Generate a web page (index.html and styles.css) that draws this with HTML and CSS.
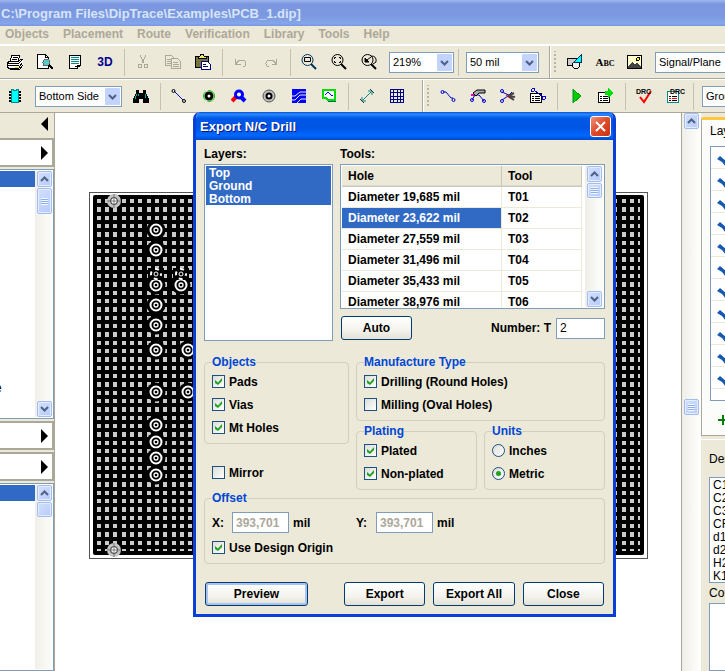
FILE: index.html
```html
<!DOCTYPE html>
<html lang="en">
<head>
    <meta charset="UTF-8">
    <meta name="viewport" content="width=device-width, initial-scale=1.0">
    <title>PCB_1.dip - Export N/C Drill</title>
    <link rel="stylesheet" href="styles.css">
</head>
<body>

<svg class="defs" width="0" height="0" aria-hidden="true">
    <symbol id="up" viewBox="0 0 9 6"><path d="M1 5 4.500 1.500 8 5" fill="none" stroke="#4d6185" stroke-width="2"/></symbol>
    <symbol id="down" viewBox="0 0 9 6"><path d="M1 1 4.500 4.500 8 1" fill="none" stroke="#4d6185" stroke-width="2"/></symbol>
    <symbol id="tri-right" viewBox="0 0 7 14"><path d="M0 0 7 7 0 14z"/></symbol>
    <symbol id="tri-left" viewBox="0 0 7 14"><path d="M7 0 0 7 7 14z"/></symbol>
    <symbol id="layer-check" viewBox="0 0 16 12"><path d="M0 3 3 0 9 5 16 0V6L9 11 5 6z" fill="#1459b3"/></symbol>
    <symbol id="via" viewBox="-11 -11 22 22">
        <circle r="9.500" fill="#000"/>
        <circle r="5.500" fill="none" stroke="#fff" stroke-width="2"/>
        <circle r="2" fill="#000" stroke="#fff" stroke-width="1.300"/>
    </symbol>
    <symbol id="via-small" viewBox="-8 -6 16 12">
        <rect x="-8" y="-6" width="16" height="12"/>
        <circle r="5" fill="none" stroke="#fff" stroke-width="2" stroke-dasharray="4 4" stroke-dashoffset="2"/>
        <circle r="2" fill="none" stroke="#fff"/>
    </symbol>
    <symbol id="mount" viewBox="-8 -8 16 16">
        <circle r="7" fill="#c4c4c4"/>
        <circle r="3.500" fill="#fff" stroke="#222"/>
        <path d="M-7 0H7M0-7V7" stroke="#777"/>
    </symbol>
</svg>

<div class="app">
    <header class="titlebar">C:\Program Files\DipTrace\Examples\PCB_1.dip]</header>

    <nav class="menu">
        <a href="#">Objects</a>
        <a href="#">Placement</a>
        <a href="#">Route</a>
        <a href="#">Verification</a>
        <a href="#">Library</a>
        <a href="#">Tools</a>
        <a href="#">Help</a>
    </nav>

    <div class="toolbar">
        <button class="tool" aria-label="Print"><svg viewBox="0 0 16 16"><path d="M5 1h8l-2 6H3z" fill="#fff" stroke="#000"/><path d="M6 3h5M5 5h5" stroke="#000"/><path d="M3 7h9l2-2 2 1v5l-3 4H3l-3-2V9z" fill="#fff" stroke="#000"/><path d="M0 9h12l3-3M1 11h11M3 14h9l3-5" stroke="#000" fill="none"/><path d="M8 13h3" stroke="#dd0" stroke-width="1"/></svg></button>
        <button class="tool" aria-label="Preview"><svg viewBox="0 0 16 16"><path d="M.5.500h8l3 3v11H.5z" fill="#fff" stroke="#000"/><path d="M8.500.500v3h3" fill="none" stroke="#000"/><circle cx="9.500" cy="8.500" r="3.500" fill="#5cc" stroke="#666"/><path d="m12 11 4 4" stroke="#000" stroke-width="2"/></svg></button>
        <button class="tool" aria-label="Titles"><svg viewBox="0 0 16 16"><path d="M2.500 1.500h11v10h-3v3h-8z" fill="#fff" stroke="#000"/><path d="M4 3.500h8M4 5.500h8M4 7.500h8M4 9.500h8" stroke="#088"/><path d="M8 12.500h5" stroke="#000"/></svg></button>
        <button class="tool text3d">3D</button>
        <span class="sep"></span>
        <button class="tool" aria-label="Cut"><svg viewBox="0 0 16 16" fill="none" stroke="#aca899"><path d="m5 1 4 8M11 1 7 9"/><circle cx="5" cy="12" r="2"/><circle cx="11" cy="12" r="2"/></svg></button>
        <button class="tool" aria-label="Copy"><svg viewBox="0 0 16 16" fill="#ece9d8" stroke="#aca899"><path d="M.5 1.500h6l3 3v7h-9zM2 5.500h5M2 7.500h5M2 9.500h5"/><path d="M6.500 4.500h6l3 3v7h-9zM8 8.500h5M8 10.500h6M8 12.500h6"/></svg></button>
        <button class="tool" aria-label="Paste"><svg viewBox="0 0 16 16"><path d="M.5 2.500h13v11H.5z" fill="#77743c" stroke="#000"/><path d="M3 4h8V2H9L8 .5H6L5 2H3z" fill="#ee6" stroke="#000"/><path d="M6.500 7.500h6l3 3v5h-9z" fill="#fff" stroke="#008"/><path d="M8 10.500h3M8 12.500h5" stroke="#008"/></svg></button>
        <span class="sep"></span>
        <button class="tool" aria-label="Undo"><svg viewBox="0 0 16 16" fill="none" stroke="#aca899"><path d="M2.500 5v5h5M3 9.500l3-3h4q3 0 3 3t-3 3"/></svg></button>
        <button class="tool" aria-label="Redo"><svg viewBox="0 0 16 16" fill="none" stroke="#aca899"><path d="M13.500 5v5h-5M13 9.500l-3-3H6q-3 0-3 3t3 3"/></svg></button>
        <span class="sep"></span>
        <button class="tool" aria-label="Zoom window"><svg class="smooth" viewBox="0 0 16 16" fill="none"><circle cx="6.500" cy="6" r="5.500" stroke="#036"/><path d="M3.500 3.500h6v4h-6z" stroke="#000"/><path d="m10 10 5 5" stroke="#035" stroke-width="2"/></svg></button>
        <button class="tool" aria-label="Zoom all"><svg class="smooth" viewBox="0 0 16 16" fill="none"><circle cx="6.500" cy="6" r="5.500" stroke="#000"/><path d="M3.500 5V3.500H5M8 3.500h1.500V5M3.500 7v1.500H5M8 8.500h1.500V7" stroke="#000"/><path d="m10 10 5 5" stroke="#000" stroke-width="2"/></svg></button>
        <button class="tool" aria-label="Zoom previous"><svg class="smooth" viewBox="0 0 16 16" fill="none"><circle cx="6.500" cy="6" r="5.500" stroke="#000"/><path d="M4 4v4h4zM6 6l4-3" stroke="#000" fill="#000"/><path d="M10 2q6 0 5 6l-3 2" stroke="#000"/><path d="m10 10 5 5" stroke="#000" stroke-width="2"/></svg></button>
        <select class="combo zoom" aria-label="Zoom"><option>219%</option></select>
        <span class="sep"></span>
        <select class="combo grid-size" aria-label="Grid"><option>50 mil</option></select>
        <span class="band"></span>
        <button class="tool" aria-label="Shape"><svg viewBox="0 0 16 16"><path d="M.5 4.500h9v7h-9z" fill="#ccc" stroke="#000" stroke-width="1"/><circle cx="9" cy="11" r="3.500" fill="#eee" stroke="#000"/><path d="M14.500.500v8h-8z" fill="#0ff" stroke="#035"/></svg></button>
        <button class="tool abc">A<small>BC</small></button>
        <button class="tool" aria-label="Picture"><svg viewBox="0 0 16 16"><path d="M.500 1.500h14v13H.5z" fill="#ffc" stroke="#000"/><path d="m1 13 4-5 3 2 2-1 4 4v1H1z" fill="#444"/><circle cx="11" cy="5" r="1.500" fill="#ff0" stroke="#000"/></svg></button>
        <select class="combo layer-type" aria-label="Layer type"><option>Signal/Plane</option></select>
    </div>

    <div class="toolbar">
        <button class="tool" aria-label="Component"><svg viewBox="0 0 16 16"><path d="M2 3.500h12M2 6.500h12M2 9.500h12M2 12.500h12" stroke="#000" stroke-width="2"/><path d="M4.500 1.500h2v1h3v-1h2v13h-7z" fill="#0ff" stroke="#088"/></svg></button>
        <select class="combo side" aria-label="Side"><option>Bottom Side</option></select>
        <button class="tool" aria-label="Find"><svg viewBox="0 0 16 16"><path d="M3 2h3v3h4V2h3v3l3 6v4h-6v-4H6v4H0v-4l3-6z"/><path d="M3.500 6 2 11M5 6v2M12 6l1 4" stroke="#0aa"/></svg></button>
        <span class="sep"></span>
        <button class="tool" aria-label="Route"><svg class="smooth" viewBox="0 0 16 16" fill="none"><path d="m3 3 9 9" stroke="#00c"/><circle cx="2.500" cy="3" r="1.500" stroke="#000"/><circle cx="13" cy="13" r="1.500" stroke="#000"/></svg></button>
        <button class="tool" aria-label="Via"><svg class="smooth" viewBox="0 0 16 16" fill="none"><circle cx="8" cy="8" r="5.500" stroke="#0c0" stroke-dasharray="10 2"/><circle cx="8" cy="8" r="3" fill="#fff" stroke="#000" stroke-width="3"/></svg></button>
        <button class="tool" aria-label="Arc route"><svg class="smooth" viewBox="0 0 16 16" fill="none"><path d="m1 13 4-4" stroke="#f00" stroke-width="4"/><path d="m10 9 4 4" stroke="#00f" stroke-width="4"/><circle cx="8" cy="6.500" r="3.500" stroke="#00f" stroke-width="3" fill="#fff"/></svg></button>
        <button class="tool" aria-label="Pad"><svg class="smooth" viewBox="0 0 16 16"><circle cx="8" cy="8" r="6" fill="#c0c0c0" stroke="#555"/><circle cx="8" cy="8" r="2.500" fill="#fff" stroke="#000" stroke-width="2"/></svg></button>
        <button class="tool" aria-label="Copper pour"><svg class="smooth" viewBox="0 0 16 16"><path d="M1 1h14v14H1z" fill="#00f"/><path d="M1 8h3l5-4h6M1 12h3l5-5h6M6 15l4-4h5" stroke="#ece9d8" fill="none"/></svg></button>
        <button class="tool" aria-label="Board"><svg viewBox="0 0 16 16"><path d="M2 3h13v11H7l-2-3H2z" fill="#066"/><path d="M1.500 1.500h12v10h-7l-2-2h-3z" fill="#fff" stroke="#0d0" stroke-width="2"/><path d="m4 7 3-3 3 3h2" stroke="#00f" fill="none"/></svg></button>
        <span class="sep"></span>
        <button class="tool" aria-label="Dimension"><svg class="smooth" viewBox="0 0 16 16" fill="none" stroke="#088"><path d="M4 12 12 4M3 9v4h4M9 3h4v4"/><path d="m1 11 4 4M11 1l4 4" stroke="#333"/></svg></button>
        <button class="tool" aria-label="Table"><svg viewBox="0 0 16 16" fill="none" stroke="#008"><path d="M1.500 1.500h13v13h-13zM4.500 2v12M8.500 2v12M11.500 2v12M2 4.500h12M2 8.500h12M2 11.500h12"/></svg></button>
        <span class="band"></span>
        <button class="tool" aria-label="Net"><svg class="smooth" viewBox="0 0 16 16" fill="none" stroke="#00c"><path d="M3 4h3l5 6h2"/><circle cx="2.500" cy="4" r="1.500"/><circle cx="13.500" cy="12" r="1.500"/></svg></button>
        <button class="tool" aria-label="Edit net"><svg class="smooth" viewBox="0 0 16 16" fill="none"><path d="m2 12 3-5h4l5 6" stroke="#00c"/><path d="m3 5 4-3h8v3H9l-3 3z" fill="#aaa" stroke="#000"/><circle cx="2" cy="12" r="1.500" stroke="#00c"/><circle cx="14" cy="13" r="1.500" stroke="#00c"/><path d="M1 7h3" stroke="#e0a" stroke-width="2"/></svg></button>
        <button class="tool" aria-label="Delete net"><svg class="smooth" viewBox="0 0 16 16" fill="none"><path d="m2 4 9 4M2 12l6-4 4-4" stroke="#00c"/><circle cx="2" cy="3" r="1.500" stroke="#00c"/><circle cx="2" cy="13" r="1.500" stroke="#00c"/><path d="m8 8 6-3M8 8l7 1M8 8l6 4" stroke="#444" stroke-width="2"/><path d="m6 7 4 3" stroke="#d00"/></svg></button>
        <button class="tool" aria-label="Net list"><svg viewBox="0 0 16 16"><path d="M.5 5.500h11v9H.5z" fill="#fff" stroke="#000"/><path d="M2 8.500h2M5 8.500h5M2 10.500h2M5 10.500h5M2 12.500h2M5 12.500h5" stroke="#000"/><path d="m4 2 9 7" stroke="#00c"/><circle cx="3" cy="2" r="1.500" fill="none" stroke="#00c"/><circle cx="14" cy="10" r="1.500" fill="none" stroke="#00c"/></svg></button>
        <span class="sep"></span>
        <button class="tool" aria-label="Run autorouter"><svg viewBox="0 0 16 16"><path d="M5 1.500 13 8l-8 7z" fill="#0c0" stroke="#0a0"/><path d="M4.500 1v14" stroke="#7b9"/></svg></button>
        <button class="tool" aria-label="Autorouter setup"><svg viewBox="0 0 16 16"><path d="M.5 4.500h11v10H.5z" fill="#fff" stroke="#000"/><path d="M2 8.500h2M5 8.500h5M2 10.500h2M5 10.500h5M2 12.500h2M5 12.500h5" stroke="#000"/><path d="M7 3h3V0l6 5-6 5V7H7z" fill="#0d0"/></svg></button>
        <span class="sep"></span>
        <button class="tool drc" aria-label="Check design rules"><svg class="smooth" viewBox="0 0 16 16"><path d="m4 9 4 5 7-11" fill="none" stroke="#f00" stroke-width="2"/></svg><i>DRC</i></button>
        <button class="tool drc" aria-label="Design rules"><svg viewBox="0 0 16 16"><path d="M1.500 3.500h11v11h-11z" fill="#fff" stroke="#088"/><path d="M3 8.500h2M6 8.500h5M3 12.500h2M6 12.500h5" stroke="#000"/><path d="M3 10.500h2M6 10.500h5" stroke="#f00"/></svg><i>DRC</i></button>
        <span class="sep"></span>
        <select class="combo layer-type" aria-label="Layer"><option>Ground</option></select>
    </div>

    <main class="workspace">
        <aside class="left-panel">
            <div class="panel-head"><svg class="tri"><use href="#tri-left"/></svg></div>
            <button class="expander" aria-label="Expand libraries"><svg class="tri"><use href="#tri-right"/></svg></button>
            <div class="tree components">
                <div class="tree-items"><div class="picked"></div><span class="clipped">e</span></div>
                <div class="scroll">
                    <button aria-label="Up"><svg><use href="#up"/></svg></button>
                    <div class="thumb"></div>
                    <button class="to-end" aria-label="Down"><svg><use href="#down"/></svg></button>
                </div>
            </div>
            <button class="expander" aria-label="Expand patterns"><svg class="tri"><use href="#tri-right"/></svg></button>
            <button class="expander" aria-label="Expand vias"><svg class="tri"><use href="#tri-right"/></svg></button>
            <div class="tree rest">
                <div class="tree-items"><div class="picked"></div></div>
                <div class="scroll">
                    <button aria-label="Up"><svg><use href="#up"/></svg></button>
                    <div class="thumb short"></div>
                </div>
            </div>
        </aside>

        <section class="canvas">
            <svg class="board" viewBox="0 0 559 367">
                <defs>
                    <pattern id="mesh" patternUnits="userSpaceOnUse" x="8" y="7" width="25" height="25">
                        <path d="M0 0h4v4H0zM8 0h4v4H8zM16 0h4v4h-4zM0 8h4v5H0zM8 8h4v5H8zM16 8h4v5h-4zM0 17h4v4H0zM8 17h4v4H8zM16 17h4v4h-4z" fill="#cbcbcb" shape-rendering="crispEdges"/>
                    </pattern>
                </defs>
                <rect x=".5" y=".5" width="558" height="366" fill="#fff" stroke="#555"/>
                <rect x="4" y="3" width="551" height="360" rx="2"/>
                <rect x="8" y="7" width="543" height="352" fill="url(#mesh)"/>
                <use href="#mount" x="17" y="1" width="16" height="16"/>
                <use href="#mount" x="17" y="350" width="16" height="16"/>
                <g>
                    <use href="#via" x="56" y="27" width="22" height="22"/>
                    <use href="#via" x="56" y="47" width="22" height="22"/>
                    <use href="#via" x="56" y="82" width="22" height="22"/>
                    <use href="#via-small" x="59" y="76" width="16" height="12"/>
                    <use href="#via" x="81" y="82" width="22" height="22"/>
                    <use href="#via-small" x="84" y="76" width="16" height="12"/>
                    <use href="#via" x="56" y="102" width="22" height="22"/>
                    <use href="#via" x="56" y="122" width="22" height="22"/>
                    <use href="#via" x="56" y="147" width="22" height="22"/>
                    <use href="#via" x="88" y="147" width="22" height="22"/>
                    <use href="#via" x="56" y="189" width="22" height="22"/>
                    <use href="#via" x="88" y="189" width="22" height="22"/>
                    <use href="#via" x="56" y="222" width="22" height="22"/>
                    <use href="#via" x="56" y="239" width="22" height="22"/>
                    <use href="#via" x="56" y="255" width="22" height="22"/>
                    <use href="#via" x="56" y="272" width="22" height="22"/>
                </g>
            </svg>
        </section>

        <div class="scroll canvas-scroll">
            <button aria-label="Up"><svg><use href="#up"/></svg></button>
            <div class="thumb"></div>
        </div>

        <aside class="right-panel">
            <div class="tab-page">
                <span>Layers</span>
                <ul class="layer-list">
                    <li><svg><use href="#layer-check"/></svg></li>
                    <li><svg><use href="#layer-check"/></svg></li>
                    <li><svg><use href="#layer-check"/></svg></li>
                    <li><svg><use href="#layer-check"/></svg></li>
                    <li><svg><use href="#layer-check"/></svg></li>
                    <li><svg><use href="#layer-check"/></svg></li>
                    <li><svg><use href="#layer-check"/></svg></li>
                    <li><svg><use href="#layer-check"/></svg></li>
                    <li><svg><use href="#layer-check"/></svg></li>
                    <li><svg><use href="#layer-check"/></svg></li>
                    <li><svg><use href="#layer-check"/></svg></li>
                </ul>
                <button class="add" aria-label="Add layer"><svg viewBox="0 0 12 12"><path d="M6 1v10M1 6h10" stroke="#008000" stroke-width="2"/></svg></button>
            </div>
            <div class="design">
                <span>Design</span>
                <ul class="parts">
                    <li>C1</li>
                    <li>C2</li>
                    <li>C3</li>
                    <li>CF</li>
                    <li>d1</li>
                    <li>d2</li>
                    <li>H2</li>
                    <li>K1</li>
                </ul>
                <span class="comp">Component</span>
                <div class="comp-list"></div>
            </div>
        </aside>
    </main>
</div>

<form class="dialog" role="dialog" aria-labelledby="dialogTitle">
    <div class="dialog-title">
        <h1 id="dialogTitle">Export N/C Drill</h1>
        <button type="button" class="close" aria-label="Close window"><svg viewBox="0 0 11 11"><path d="m1 1 9 9M10 1l-9 9" stroke="#fff" stroke-width="2"/></svg></button>
    </div>

    <div class="dialog-body">
        <div class="lists">
            <div class="layers">
                <label for="layers">Layers:</label>
                <select id="layers" multiple>
                    <option selected>Top</option>
                    <option selected>Ground</option>
                    <option selected>Bottom</option>
                </select>
            </div>
            <div class="tools">
                <span class="caption" id="toolsCaption">Tools:</span>
                <div class="tools-box">
                    <table aria-labelledby="toolsCaption">
                        <thead>
                            <tr><th>Hole</th><th>Tool</th></tr>
                        </thead>
                        <tbody>
                            <tr><td>Diameter 19,685 mil</td><td>T01</td></tr>
                            <tr class="current"><td>Diameter 23,622 mil</td><td>T02</td></tr>
                            <tr><td>Diameter 27,559 mil</td><td>T03</td></tr>
                            <tr><td>Diameter 31,496 mil</td><td>T04</td></tr>
                            <tr><td>Diameter 35,433 mil</td><td>T05</td></tr>
                            <tr><td>Diameter 38,976 mil</td><td>T06</td></tr>
                        </tbody>
                    </table>
                    <div class="scroll">
                        <button type="button" aria-label="Up"><svg><use href="#up"/></svg></button>
                        <div class="thumb short"></div>
                        <button type="button" class="to-end" aria-label="Down"><svg><use href="#down"/></svg></button>
                    </div>
                </div>
                <div class="tool-edit">
                    <button type="button" class="btn auto">Auto</button>
                    <label for="number">Number: T</label>
                    <input type="text" id="number" value="2">
                </div>
            </div>
        </div>

        <div class="options">
            <div class="col-left">
                <fieldset>
                    <legend>Objects</legend>
                    <label class="check"><input type="checkbox" checked>Pads</label>
                    <label class="check"><input type="checkbox" checked>Vias</label>
                    <label class="check"><input type="checkbox" checked>Mt Holes</label>
                </fieldset>
                <label class="check mirror"><input type="checkbox">Mirror</label>
            </div>
            <div class="col-right">
                <fieldset class="wide">
                    <legend>Manufacture Type</legend>
                    <label class="check"><input type="checkbox" checked>Drilling (Round Holes)</label>
                    <label class="check"><input type="checkbox">Milling (Oval Holes)</label>
                </fieldset>
                <fieldset>
                    <legend>Plating</legend>
                    <label class="check"><input type="checkbox" checked>Plated</label>
                    <label class="check"><input type="checkbox" checked>Non-plated</label>
                </fieldset>
                <fieldset>
                    <legend>Units</legend>
                    <label class="check"><input type="radio" name="units">Inches</label>
                    <label class="check"><input type="radio" name="units" checked>Metric</label>
                </fieldset>
            </div>
        </div>

        <fieldset class="offset">
            <legend>Offset</legend>
            <div class="coords">
                <div class="coord"><label for="offX">X:</label><input type="text" id="offX" value="393,701" disabled>mil</div>
                <div class="coord"><label for="offY">Y:</label><input type="text" id="offY" value="393,701" disabled>mil</div>
            </div>
            <label class="check"><input type="checkbox" checked>Use Design Origin</label>
        </fieldset>

        <div class="actions">
            <button type="button" class="btn default">Preview</button>
            <button type="button" class="btn">Export</button>
            <button type="button" class="btn">Export All</button>
            <button type="button" class="btn">Close</button>
        </div>
    </div>
</form>

</body>
</html>
```

FILE: styles.css
```css
* {
    margin: 0;
    padding: 0;
    box-sizing: border-box;
}
body {
    background: #ece9d8;
    font-family: "Liberation Sans", Arial, sans-serif;
    font-size: 12px;
    color: #000;
    overflow: hidden;
}
button, input, select {
    font: inherit;
    color: inherit;
}
ul {
    list-style: none;
}
.defs {
    position: absolute;
}
.app {
    height: 100vh;
    display: flex;
    flex-direction: column;
    overflow: hidden;
}

/* main window */
.titlebar {
    height: 26px;
    flex: none;
    padding-left: 1px;
    line-height: 27px;
    font-size: 13px;
    font-weight: bold;
    color: #d8e4f8;
    background: linear-gradient(#9db6ec, #7a96df 16%, #7b99e1 60%, #84a6ea 90%, #7a96df);
    white-space: nowrap;
}
.menu {
    height: 19px;
    flex: none;
    display: flex;
    gap: 14px;
    padding-left: 5px;
    line-height: 16px;
    border-bottom: 1px solid #fff;
}
.menu a {
    color: #aca899;
    font-weight: bold;
    text-decoration: none;
}
.toolbar {
    height: 34px;
    flex: none;
    display: flex;
    align-items: center;
    border-top: 1px solid #fff;
    border-bottom: 1px solid #aca899;
    overflow: hidden;
}
.tool {
    width: 30px;
    height: 30px;
    flex: none;
    display: flex;
    align-items: center;
    justify-content: center;
    border: none;
    background: none;
}
.tool svg {
    width: 16px;
    height: 16px;
    shape-rendering: crispEdges;
}
.tool .smooth {
    shape-rendering: auto;
}
.text3d {
    font-weight: bold;
    color: #000090;
}
.abc {
    font-family: "Liberation Serif", serif;
    font-size: 11px;
    font-weight: bold;
    align-items: baseline;
    line-height: 30px;
}
.abc small {
    font-size: 8px;
}
.drc {
    position: relative;
}
.drc i {
    position: absolute;
    top: 7px;
    left: 7px;
    font-size: 7px;
    line-height: 7px;
    font-style: normal;
    font-weight: bold;
}
.drc + .drc i {
    left: 11px;
}
.sep {
    width: 8px;
    height: 27px;
    flex: none;
    background: linear-gradient(#c5c2b2, #c5c2b2) center / 1px 100% no-repeat;
}
.band {
    width: 11px;
    height: 34px;
    flex: none;
    margin-left: 10px;
    border-left: 1px solid #aca899;
    box-shadow: inset 1px 0 #fff;
    background: linear-gradient(#b8b4a4 50%, transparent 50%) 4px 5px / 2px 4px repeat-y;
    background-clip: content-box;
    padding: 6px 0;
}
.combo {
    height: 21px;
    flex: none;
    appearance: none;
    padding: 0 16px 0 3px;
    border: 1px solid #7f9db9;
    border-radius: 0;
    font-size: 11px;
    background: #fff url("data:image/svg+xml,%3Csvg xmlns='http://www.w3.org/2000/svg' width='15' height='17'%3E%3Crect width='15' height='17' rx='1' fill='%23c3d3fb'/%3E%3Cpath d='M4 7l3.500 3.500L11 7' fill='none' stroke='%234d6185' stroke-width='2'/%3E%3C/svg%3E") right 1px center no-repeat;
}
.zoom {
    width: 65px;
    margin-left: 5px;
}
.grid-size {
    width: 73px;
    margin-left: 4px;
}
.side {
    width: 87px;
    margin: 0 4px 0 5px;
}
.layer-type {
    width: 100px;
    margin-left: 5px;
}
.workspace {
    flex: 1;
    min-height: 0;
    display: flex;
}

/* scroll bars */
.scroll {
    width: 18px;
    flex: none;
    display: flex;
    flex-direction: column;
    align-items: center;
    gap: 1px;
    background: linear-gradient(to right, #efeee8, #fefefb);
}
.scroll button, .thumb {
    width: 15px;
    height: 16px;
    flex: none;
    display: flex;
    align-items: center;
    justify-content: center;
    border: 1px solid #a4bbee;
    border-radius: 2px;
    box-shadow: inset 0 0 0 1px #e4ecff;
    background: linear-gradient(135deg, #d3dffd, #b6cafa);
}
.scroll svg {
    width: 9px;
    height: 6px;
}
.scroll .to-end {
    margin-top: auto;
}
.thumb {
    height: 26px;
}
.thumb::after {
    content: "";
    width: 7px;
    height: 7px;
    background: repeating-linear-gradient(#f4f8ff 0, #f4f8ff 1px, #8cadf0 1px, #8cadf0 2px);
}
.thumb.short {
    height: 15px;
}

/* left panel */
.left-panel {
    width: 55px;
    flex: none;
    display: flex;
    flex-direction: column;
    border-right: 1px solid #aca899;
}
.tri {
    width: 7px;
    height: 14px;
}
.panel-head {
    height: 25px;
    flex: none;
    padding: 4px 6px 0 0;
    text-align: right;
}
.expander {
    height: 29px;
    flex: none;
    margin-bottom: 2px;
    padding-right: 4px;
    display: flex;
    align-items: center;
    justify-content: flex-end;
    border: 2px solid #aca899;
    border-left: none;
    background: #fff;
}
.tree {
    display: flex;
    border: 1px solid #7f9db9;
    border-left: none;
    padding: 1px 0;
    background: #fff;
}
.components {
    height: 250px;
    flex: none;
    margin-bottom: 2px;
}
.rest {
    flex: 1;
}
.tree-items {
    flex: 1;
    overflow: hidden;
}
.picked {
    height: 16px;
    background: #316ac5;
}
.clipped {
    display: block;
    margin-top: 194px;
    text-indent: -5px;
}
.rest .thumb::after {
    display: none;
}

/* board */
.canvas {
    flex: 1;
    min-width: 0;
    padding: 79px 34px;
    background: #fff;
    overflow: hidden;
}
.board {
    display: block;
    width: 559px;
    height: 367px;
}
.canvas-scroll {
    width: 19px;
    border-left: 1px solid #aca899;
}
.canvas-scroll .thumb {
    height: 16px;
    margin-top: 269px;
}

/* right panel */
.right-panel {
    width: 25px;
    flex: none;
    display: flex;
    flex-direction: column;
    padding-top: 4px;
    border-left: 1px solid #fff;
    overflow: hidden;
}
.tab-page {
    height: 319px;
    flex: none;
    padding: 4px 0 0 8px;
    border-top: 3px solid #ffc73c;
    border-left: 1px solid #aca899;
    border-bottom: 1px solid #aca899;
    border-radius: 3px 0 0 0;
    background: #fcfcfa;
}
.tab-page > span {
    display: block;
    height: 22px;
    line-height: 14px;
}
.layer-list {
    height: 255px;
    width: 80px;
    border: 1px solid #7f9db9;
    background: #fff;
    overflow: hidden;
}
.layer-list li {
    height: 22px;
    padding: 9px 0 0 6px;
    border-bottom: 1px solid #ece9d8;
}
.layer-list svg {
    display: block;
    width: 16px;
    height: 12px;
}
.add {
    display: block;
    margin: 13px 0 0 7px;
    border: none;
    background: none;
}
.add svg {
    display: block;
    width: 12px;
    height: 12px;
}
.design {
    flex: 1;
    display: flex;
    flex-direction: column;
    margin-top: 3px;
    padding: 12px 0 0 8px;
    border-top: 1px solid #fff;
}
.design > span {
    height: 25px;
    line-height: 14px;
}
.parts {
    width: 80px;
    height: 106px;
    border: 1px solid #7f9db9;
    padding: 1px 0 0 3px;
    line-height: 13px;
    background: #fff;
}
.design > .comp {
    height: 20px;
    line-height: 20px;
}
.comp-list {
    flex: 1;
    width: 80px;
    border: 1px solid #7f9db9;
    background: #fff;
}

/* export dialog */
.dialog {
    position: absolute;
    top: 112px;
    left: 193px;
    width: 423px;
    border: 3px solid #0a3fd8;
    border-top: none;
    border-radius: 7px 7px 0 0;
    background: #ece9d8;
    font-weight: bold;
    overflow: hidden;
}
.dialog-title {
    height: 28px;
    margin: 0 -3px;
    padding: 0 5px 0 7px;
    display: flex;
    align-items: center;
    justify-content: space-between;
    background: linear-gradient(#0a52d8, #2a8bff 8%, #0058e6 22%, #0054e3 55%, #0068ff 85%, #0049c8);
}
.dialog-title h1 {
    font-size: 13px;
    color: #fff;
    text-shadow: 1px 1px #0a1883;
}
.close {
    width: 21px;
    height: 21px;
    display: flex;
    align-items: center;
    justify-content: center;
    border: 1px solid #fff;
    border-radius: 3px;
    background: linear-gradient(135deg, #f0917a, #e0492a 50%, #c8340f);
}
.close svg {
    width: 11px;
    height: 11px;
}
.dialog-body {
    padding: 7px 8px 8px;
}
.lists {
    display: flex;
    gap: 7px;
}
.layers {
    width: 129px;
    display: flex;
    flex-direction: column;
}
.layers label, .caption {
    display: block;
    height: 17px;
    line-height: 15px;
}
.layers select {
    height: 177px;
    padding: 1px;
    border: 1px solid #7f9db9;
    border-radius: 0;
    background: #fff;
    overflow: hidden;
    outline: none;
}
.layers option {
    height: 13px;
    min-height: 13px;
    padding: 0 3px;
    font-weight: bold;
    line-height: 13px;
}
.layers option:checked {
    color: #fff;
    background: #316ac5 linear-gradient(#316ac5, #316ac5);
}
.tools {
    flex: 1;
}
.tools-box {
    height: 145px;
    padding: 1px;
    display: flex;
    justify-content: space-between;
    border: 1px solid #7f9db9;
    background: #fff;
    overflow: hidden;
}
.tools table {
    width: 240px;
    border-collapse: separate;
    border-spacing: 0;
    table-layout: fixed;
    align-self: flex-start;
}
.tools th, .tools td {
    height: 21px;
    padding-left: 6px;
    text-align: left;
    border-right: 1px solid #ece9d8;
    border-bottom: 1px solid #ece9d8;
}
.tools th {
    width: 160px;
    background: #ece9d8;
    border-color: #cbc7b8;
    box-shadow: inset 0 -1px #dedbca;
}
.tools th + th {
    width: auto;
}
.current td:first-child {
    color: #fff;
    background: #316ac5;
}
.tool-edit {
    display: flex;
    align-items: center;
    margin-top: 7px;
}
.tool-edit label {
    margin: 0 5px 0 auto;
}
.btn {
    flex: 1;
    height: 24px;
    border: 1px solid #003c74;
    border-radius: 3px;
    background: linear-gradient(#fff, #f4f3ee 60%, #e4e0d4);
    font-weight: bold;
}
.btn.auto {
    flex: none;
    width: 71px;
    margin-left: 1px;
}
.btn.default {
    flex: none;
    width: 103px;
    margin-right: 28px;
    box-shadow: inset 0 0 0 2px #a9c3f0;
}
input[type="text"] {
    height: 21px;
    padding: 0 3px;
    border: 1px solid #7f9db9;
    background: #fff;
}
#number {
    width: 49px;
    font-weight: normal;
}
.options {
    display: flex;
    gap: 7px;
    margin-top: 14px;
}
.col-left {
    width: 145px;
}
.col-right {
    flex: 1;
    display: grid;
    grid-template-columns: 121px 1fr;
    gap: 3px 7px;
    align-content: start;
}
.wide {
    grid-column: 1 / 3;
}
fieldset {
    min-width: 0;
    padding: 1px 7px 4px;
    border: 1px solid #d0d0bf;
    border-radius: 4px;
}
legend {
    height: 14px;
    line-height: 14px;
    color: #0046d5;
}
.check {
    height: 23px;
    display: flex;
    align-items: center;
    gap: 4px;
}
.mirror {
    margin: 17px 0 0 8px;
}
.check input {
    appearance: none;
    width: 13px;
    height: 13px;
    border: 1px solid #1c5180;
    background: linear-gradient(135deg, #dcdcd7, #fff);
}
.check input:checked::after {
    content: "";
    display: block;
    width: 7px;
    height: 7px;
    margin: 2px;
    background: #21a121;
    clip-path: polygon(0 29%, 43% 64%, 100% 0, 100% 43%, 43% 100%, 0 72%);
}
.check input[type="radio"] {
    border-radius: 50%;
}
.check input[type="radio"]:checked::after {
    width: 5px;
    height: 5px;
    margin: 3px;
    border-radius: 50%;
    clip-path: none;
}
.offset {
    margin-top: 1px;
    padding-top: 7px;
}
.coords {
    display: flex;
    margin-bottom: 3px;
}
.coord {
    width: 144px;
    display: flex;
    align-items: center;
    gap: 4px;
}
.coord label {
    width: 16px;
}
.coord input {
    width: 57px;
}
.coord input:disabled {
    color: #aca899;
}
.actions {
    display: flex;
    gap: 8px;
    margin-top: 18px;
    padding: 0 1px;
}
```
